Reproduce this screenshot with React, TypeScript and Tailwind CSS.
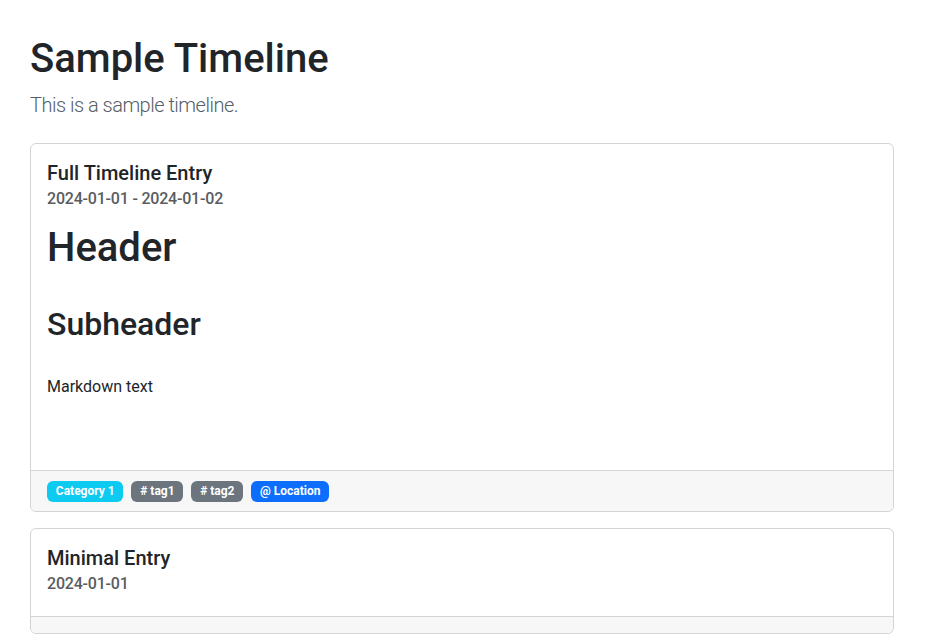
const FONT = "font-['Roboto',_'Noto_Sans',_sans-serif]";

type Badge = { label: string; color: string };

type Entry = {
  title: string;
  date: string;
  body?: React.ReactNode;
  badges?: Badge[];
};

const entries: Entry[] = [
  {
    title: "Full Timeline Entry",
    date: "2024-01-01 - 2024-01-02",
    body: (
      <div className="flex flex-col">
        <h1 className="mt-[9px] text-[40px] leading-[48px] font-medium">Header</h1>
        <h2 className="mt-[33px] text-[32px] leading-[38.4px] font-medium">Subheader</h2>
        <p className="mt-[31px] mb-[55px] text-base leading-6">Markdown text</p>
      </div>
    ),
    badges: [
      { label: "Category 1", color: "bg-[#0dcaf0]" },
      { label: "# tag1", color: "bg-[#6c757d]" },
      { label: "# tag2", color: "bg-[#6c757d]" },
      { label: "@ Location", color: "bg-[#0d6efd]" },
    ],
  },
  { title: "Minimal Entry", date: "2024-01-01" },
];

function Card({ entry }: { entry: Entry }) {
  return (
    <div className="mb-4 flex flex-col rounded-md border border-[#d3d4d5] bg-white">
      <div className="flex flex-col px-4 pt-[17px] pb-4">
        <h5 className="mb-1 text-xl leading-6 font-medium">{entry.title}</h5>
        <h6 className="mb-[7px] text-base leading-[19.2px] font-medium tracking-[-0.2px] text-[#595c5f]">
          {entry.date}
        </h6>
        {entry.body}
      </div>
      <div className="flex min-h-[17px] items-center gap-2 rounded-b-md border-t border-[#d3d4d5] bg-[#f7f7f7] px-4 py-2">
        {entry.badges?.map((badge) => (
          <span
            key={badge.label}
            className={`${badge.color} mt-[2px] mb-[1px] rounded-md px-[8.8px] py-[4.5px] text-xs leading-3 font-bold text-white`}
          >
            {badge.label}
          </span>
        ))}
      </div>
    </div>
  );
}

export default function App() {
  return (
    <div className={`${FONT} min-h-screen bg-white pt-[35px] pr-[40px] pl-[30px] text-[#212529]`}>
      <h1 className="mb-[7px] text-[40px] leading-[48px] font-medium">Sample Timeline</h1>
      <p className="mb-[23px] text-xl leading-[30px] font-light tracking-[-0.5px] text-[#565d66]">
        This is a sample timeline.
      </p>
      {entries.map((entry) => (
        <Card key={entry.title} entry={entry} />
      ))}
    </div>
  );
}
